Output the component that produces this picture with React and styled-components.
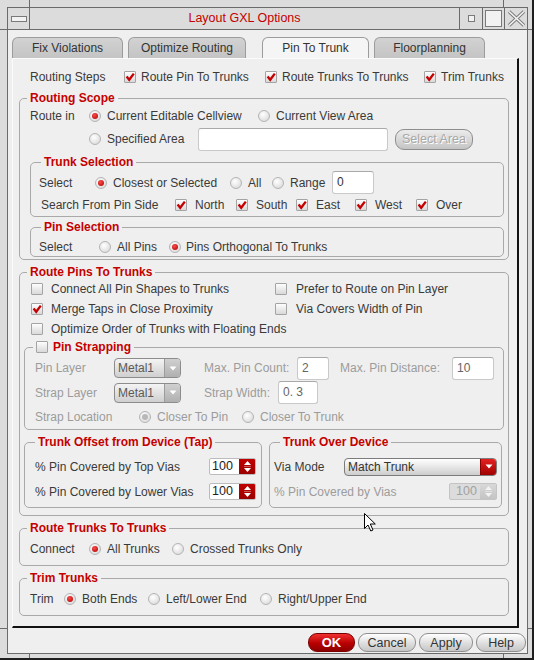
import React from 'react'
import styled, {createGlobalStyle} from 'styled-components'

const RED = '#c40000'
const LINE = '#6b6b6b'

const GlobalStyle = createGlobalStyle`
  html, body { margin: 0; padding: 0; background: #dcdcdc; }
  body {
    font-family: "Liberation Sans", Arial, sans-serif;
    font-size: 12px;
    color: #3a3a3a;
  }
  * { box-sizing: border-box; }
`

const Screen = styled.div`
  position: relative;
  width: 534px;
  height: 660px;
  padding: 7px 0 0 7px;
  background: #dcdcdc;
  border-right: 2px solid #1e1e1e;
  border-bottom: 2px solid #1e1e1e;
  overflow: hidden;
`

const Tick = styled.span`
  position: absolute;
  background: ${LINE};
  left: ${p => p.$x}px;
  top: ${p => p.$y}px;
  width: ${p => p.$w}px;
  height: ${p => p.$h}px;
`

const Frame = styled.div`
  width: 521px;
  height: 647px;
  border: 1px solid ${LINE};
  display: flex;
  flex-direction: column;
`

const TitleBar = styled.div`
  flex: none;
  height: 22px;
  display: flex;
  border-bottom: 1px solid ${LINE};
  background: #dcdcdc;
`

const MenuBtn = styled.div`
  width: 22px;
  border-right: 1px solid ${LINE};
  display: flex;
  align-items: center;
  justify-content: center;
  span {
    width: 16px;
    height: 6px;
    border: 1px solid #7a7a7a;
    background: #f2f2f2;
  }
`

const TitleText = styled.div`
  flex: 1;
  text-align: center;
  color: ${RED};
  font-size: 12.5px;
  line-height: 21px;
`

const WinBtn = styled.div`
  width: ${p => p.$w}px;
  border-left: 1px solid ${LINE};
  display: flex;
  align-items: center;
  justify-content: center;
`

const Square = styled.span`
  width: ${p => p.$s}px;
  height: ${p => p.$s}px;
  border: 1px solid #7a7a7a;
  background: #f2f2f2;
`

const Body = styled.div`
  flex: 1;
  background: #efefef;
  padding: 7px 0 0 4px;
  display: flex;
  flex-direction: column;
`

const TabStrip = styled.div`
  display: flex;
  height: 21px;
`

const Tab = styled.div`
  width: ${p => p.$w}px;
  margin-left: ${p => p.$ml || 0}px;
  height: 21px;
  border: 1px solid #9c9c9c;
  border-bottom: none;
  border-radius: 6px 6px 0 0;
  background: ${p => (p.$active ? '#f5f5f5' : 'linear-gradient(#d2d2d2, #c4c4c4)')};
  color: #333;
  text-align: center;
  line-height: 21px;
`

const Panel = styled.div`
  width: 507px;
  height: 570px;
  background: #efefef;
  border-top: 1px solid #fbfbfb;
  border-left: 1px solid #fbfbfb;
  border-right: 2px solid #111;
  border-bottom: 2px solid #111;
  padding: 4px 8px 0 6px;
`

const Row = styled.div`
  display: flex;
  align-items: center;
  height: ${p => p.$h}px;
  margin-top: ${p => p.$mt || 0}px;
  padding-left: ${p => p.$pl || 0}px;
`

const Label = styled.span`
  flex: ${p => (p.$w ? 'none' : '1')};
  width: ${p => (p.$w ? `${p.$w}px` : 'auto')};
  margin-left: ${p => p.$ml || 0}px;
  color: ${p => (p.$dim ? '#9c9c9c' : '#3a3a3a')};
  white-space: nowrap;
`

const Opt = styled.label`
  display: flex;
  align-items: center;
  gap: ${p => p.$gap || 6}px;
  width: ${p => (p.$w ? `${p.$w}px` : 'auto')};
  flex: none;
  color: ${p => (p.$dim ? '#9c9c9c' : '#3a3a3a')};
  white-space: nowrap;
`

const Box = styled.span`
  flex: none;
  width: 12px;
  height: 12px;
  border: 1px solid #a4a4a4;
  border-radius: 1px;
  background: linear-gradient(#fdfdfd, #d9d9d9);
  display: flex;
  align-items: center;
  justify-content: center;
`

const Round = styled.span`
  flex: none;
  width: 12px;
  height: 12px;
  border-radius: 50%;
  border: 1px solid #b4b4b4;
  background: radial-gradient(circle at 40% 35%, #ffffff, #d4d4d4);
  display: flex;
  align-items: center;
  justify-content: center;
  &::after {
    content: "";
    display: ${p => (p.$on ? 'block' : 'none')};
    width: 6px;
    height: 6px;
    border-radius: 50%;
    background: ${p => (p.$dim ? '#b8b8b8' : 'radial-gradient(circle at 40% 35%, #ff4a4a, #a80000)')};
  }
`

const Group = styled.fieldset`
  margin: ${p => p.$mt || 0}px 0 0 0;
  padding: 0;
  min-width: 0;
  width: ${p => (p.$w ? `${p.$w}px` : 'auto')};
  border: 1px solid #a9a9a9;
  border-radius: 5px;
`

const Legend = styled.legend`
  margin-left: ${p => p.$ml}px;
  padding: 0 3px;
  color: ${RED};
  font-weight: bold;
  line-height: 14px;
  display: flex;
  align-items: center;
  gap: 5px;
`

const GroupBody = styled.div`
  padding: ${p => p.$pt || 0}px ${p => p.$pr || 0}px ${p => p.$pb || 0}px ${p => p.$pl || 0}px;
`

const Field = styled.span`
  flex: none;
  width: ${p => p.$w}px;
  height: ${p => p.$h || 23}px;
  margin-left: ${p => p.$ml || 0}px;
  background: #fff;
  border: 1px solid #c9c9c9;
  border-top-color: #a9a9a9;
  border-radius: 3px;
  padding-left: 4px;
  line-height: ${p => (p.$h || 23) - 3}px;
  color: ${p => (p.$dim ? '#666' : '#333')};
`

const PillBtn = styled.span`
  flex: none;
  width: ${p => p.$w}px;
  height: ${p => p.$h || 19}px;
  margin-left: ${p => p.$ml || 0}px;
  border-radius: 9px;
  border: 1px solid ${p => (p.$red ? '#7a0000' : '#8e8e8e')};
  background: ${p =>
    p.$red
      ? 'linear-gradient(#f03030, #b80000 55%, #8c0000)'
      : p.$dim
        ? 'linear-gradient(#ececec, #c4c4c4)'
        : 'linear-gradient(#ffffff, #dedede 55%, #c6c6c6)'};
  color: ${p => (p.$red ? '#fff' : p.$dim ? '#a8a8a8' : '#333')};
  font-weight: ${p => (p.$red ? 'bold' : 'normal')};
  font-size: ${p => (p.$red ? 13 : 12.5)}px;
  text-shadow: ${p => (p.$dim ? '1px 1px 0 #fff' : 'none')};
  display: flex;
  align-items: center;
  justify-content: center;
`

const Combo = styled.span`
  flex: ${p => (p.$w ? 'none' : '1')};
  width: ${p => (p.$w ? `${p.$w}px` : 'auto')};
  height: ${p => p.$h}px;
  display: flex;
  border: 1px solid ${p => (p.$red ? '#7c7c7c' : '#8c8c8c')};
  border-radius: 4px;
  overflow: hidden;
  background: ${p => (p.$red ? 'linear-gradient(#ffffff, #e4e4e4 55%, #cdcdcd)' : 'linear-gradient(#f4f4f4, #cfcfcf)')};
  color: ${p => (p.$red ? '#333' : '#5a5a5a')};
  span:first-child {
    flex: 1;
    padding-left: 3px;
    line-height: ${p => p.$h - 2}px;
  }
`

const ComboArrow = styled.span`
  width: 16px;
  flex: none;
  display: flex;
  align-items: center;
  justify-content: center;
  border-left: 1px solid ${p => (p.$red ? '#8a0000' : '#9c9c9c')};
  background: ${p => (p.$red ? 'linear-gradient(#e42020, #a00000)' : 'linear-gradient(#d0d0d0, #b0b0b0)')};
`

const Spin = styled.span`
  flex: none;
  width: ${p => p.$w}px;
  height: 17px;
  display: flex;
  border: 1px solid ${p => (p.$dim ? '#c4c4c4' : '#bcbcbc')};
  border-radius: 2px;
  overflow: hidden;
  background: ${p => (p.$dim ? '#dcdcdc' : '#fff')};
  color: ${p => (p.$dim ? '#a2a2a2' : '#222')};
  span:first-child {
    flex: 1;
    padding-left: ${p => (p.$dim ? 6 : 2)}px;
    line-height: 15px;
    font-size: 12.5px;
  }
`

const SpinArrows = styled.span`
  width: 16px;
  flex: none;
  display: flex;
  align-items: center;
  justify-content: center;
  background: ${p => (p.$dim ? 'linear-gradient(#d8d8d8, #c4c4c4)' : 'linear-gradient(#c00000, #9c0000)')};
`

const Pair = styled.div`
  display: flex;
  gap: 7px;
  margin-top: 5px;
`

const ButtonBar = styled.div`
  display: flex;
  justify-content: flex-end;
  gap: 3px;
  margin-top: 5px;
  padding-right: 1px;
`

const Cursor = styled.svg`
  position: absolute;
  left: 364px;
  top: 513px;
`

const Check = ({on, label, w, gap = 5, dim}) => (
    <Opt $w={w} $gap={gap} $dim={dim}>
        <Box>
            {on && (
                <svg width="10" height="10" viewBox="0 0 10 10">
                    <path d="M1.6 4.6 L4.2 7.8 L8.8 1.6" stroke={RED} strokeWidth="2.3" fill="none"/>
                </svg>
            )}
        </Box>
        {label}
    </Opt>
)

const Radio = ({on, label, w, gap = 6, dim}) => (
    <Opt $w={w} $gap={gap} $dim={dim}>
        <Round $on={on} $dim={dim}/>
        {label}
    </Opt>
)

const Down = ({color = '#fff'}) => (
    <svg width="8" height="5" viewBox="0 0 8 5">
        <path d="M0.5 0.5 L7.5 0.5 L4 4.5 Z" fill={color}/>
    </svg>
)

const UpDown = ({color = '#fff'}) => (
    <svg width="9" height="13" viewBox="0 0 9 13">
        <path d="M1 5 L8 5 L4.5 1 Z" fill={color}/>
        <path d="M1 8 L8 8 L4.5 12 Z" fill={color}/>
        <line x1="1" y1="6.5" x2="8" y2="6.5" stroke="rgba(255,255,255,0.35)" strokeWidth="1"/>
    </svg>
)

const App = () => {
    return (
        <Screen>
            <GlobalStyle/>
            <Tick $x={29} $y={0} $w={1} $h={7}/>
            <Tick $x={503} $y={0} $w={1} $h={7}/>
            <Tick $x={0} $y={29} $w={7} $h={1}/>
            <Tick $x={527} $y={29} $w={7} $h={1}/>
            <Tick $x={0} $y={628} $w={7} $h={1}/>
            <Tick $x={527} $y={628} $w={7} $h={1}/>
            <Tick $x={29} $y={653} $w={1} $h={7}/>
            <Tick $x={503} $y={653} $w={1} $h={7}/>

            <Frame>
                <TitleBar>
                    <MenuBtn><span/></MenuBtn>
                    <TitleText>Layout GXL Options</TitleText>
                    <WinBtn $w={23}><Square $s={7}/></WinBtn>
                    <WinBtn $w={22}><Square $s={17}/></WinBtn>
                    <WinBtn $w={23}>
                        <svg width="19" height="17" viewBox="0 0 19 17">
                            <path d="M2 1.5 L17 15.5 M17 1.5 L2 15.5" stroke="#7a7a7a" strokeWidth="3.4"/>
                            <path d="M2 1.5 L17 15.5 M17 1.5 L2 15.5" stroke="#f4f4f4" strokeWidth="1.6"/>
                        </svg>
                    </WinBtn>
                </TitleBar>

                <Body>
                    <TabStrip>
                        <Tab $w={111}>Fix Violations</Tab>
                        <Tab $w={118} $ml={5}>Optimize Routing</Tab>
                        <Tab $w={107} $ml={16} $active>Pin To Trunk</Tab>
                        <Tab $w={111} $ml={5}>Floorplanning</Tab>
                    </TabStrip>

                    <Panel>
                        <Row $h={28} $pl={11}>
                            <Label $w={94}>Routing Steps</Label>
                            <Check on w={141} label="Route Pin To Trunks"/>
                            <Check on w={159} label="Route Trunks To Trunks"/>
                            <Check on label="Trim Trunks"/>
                        </Row>

                        <Group>
                            <Legend $ml={7}>Routing Scope</Legend>
                            <GroupBody $pl={10} $pr={4} $pb={2}>
                                <Row $h={22}>
                                    <Label $w={59}>Route in</Label>
                                    <Radio on w={169} label="Current Editable Cellview"/>
                                    <Radio label="Current View Area"/>
                                </Row>
                                <Row $h={24}>
                                    <Label $w={59}/>
                                    <Radio w={109} label="Specified Area"/>
                                    <Field $w={190}/>
                                    <PillBtn $w={78} $h={21} $ml={7} $dim>Select Area</PillBtn>
                                </Row>

                                <Group $mt={4}>
                                    <Legend $ml={10}>Trunk Selection</Legend>
                                    <GroupBody $pl={8} $pt={1} $pb={1}>
                                        <Row $h={25}>
                                            <Label $w={56}>Select</Label>
                                            <Radio on w={135} label="Closest or Selected"/>
                                            <Radio w={42} label="All"/>
                                            <Radio w={60} label="Range"/>
                                            <Field $w={42}>0</Field>
                                        </Row>
                                        <Row $h={20} $pl={2}>
                                            <Label $w={134}>Search From Pin Side</Label>
                                            <Check on w={61} gap={8} label="North"/>
                                            <Check on w={60} gap={8} label="South"/>
                                            <Check on w={59} gap={8} label="East"/>
                                            <Check on w={61} gap={8} label="West"/>
                                            <Check on gap={8} label="Over"/>
                                        </Row>
                                    </GroupBody>
                                </Group>

                                <Group $mt={3}>
                                    <Legend $ml={10}>Pin Selection</Legend>
                                    <GroupBody $pl={8} $pt={4}>
                                        <Row $h={18}>
                                            <Label $w={60}>Select</Label>
                                            <Radio w={70} gap={6} label="All Pins"/>
                                            <Radio on gap={5} label="Pins Orthogonal To Trunks"/>
                                        </Row>
                                    </GroupBody>
                                </Group>
                            </GroupBody>
                        </Group>

                        <Group $mt={5}>
                            <Legend $ml={7}>Route Pins To Trunks</Legend>
                            <GroupBody $pl={4} $pr={4} $pb={7}>
                                <Row $h={20} $pl={7}>
                                    <Check w={244} gap={8} label="Connect All Pin Shapes to Trunks"/>
                                    <Check gap={9} label="Prefer to Route on Pin Layer"/>
                                </Row>
                                <Row $h={20} $pl={7}>
                                    <Check on w={244} gap={8} label="Merge Taps in Close Proximity"/>
                                    <Check gap={9} label="Via Covers Width of Pin"/>
                                </Row>
                                <Row $h={20} $pl={7}>
                                    <Check gap={8} label="Optimize Order of Trunks with Floating Ends"/>
                                </Row>

                                <Group $mt={1}>
                                    <Legend $ml={8}>
                                        <Box/>
                                        Pin Strapping
                                    </Legend>
                                    <GroupBody $pl={10} $pt={2}>
                                        <Row $h={24}>
                                            <Label $w={79} $dim>Pin Layer</Label>
                                            <Combo $w={67} $h={20}>
                                                <span>Metal1</span>
                                                <ComboArrow><Down/></ComboArrow>
                                            </Combo>
                                            <Label $w={93} $ml={23} $dim>Max. Pin Count:</Label>
                                            <Field $w={32} $dim>2</Field>
                                            <Label $w={112} $ml={11} $dim>Max. Pin Distance:</Label>
                                            <Field $w={42} $dim>10</Field>
                                        </Row>
                                        <Row $h={25}>
                                            <Label $w={79} $dim>Strap Layer</Label>
                                            <Combo $w={67} $h={20}>
                                                <span>Metal1</span>
                                                <ComboArrow><Down/></ComboArrow>
                                            </Combo>
                                            <Label $w={74} $ml={23} $dim>Strap Width:</Label>
                                            <Field $w={40} $dim>0. 3</Field>
                                        </Row>
                                        <Row $h={24}>
                                            <Label $w={104} $dim>Strap Location</Label>
                                            <Radio on dim w={103} label="Closer To Pin"/>
                                            <Radio dim label="Closer To Trunk"/>
                                        </Row>
                                    </GroupBody>
                                </Group>

                                <Pair>
                                    <Group $w={238}>
                                        <Legend $ml={10}>Trunk Offset from Device (Tap)</Legend>
                                        <GroupBody $pl={10} $pr={5} $pt={8} $pb={6}>
                                            <Row $h={19}>
                                                <Label>% Pin Covered by Top Vias</Label>
                                                <Spin $w={47}>
                                                    <span>100</span>
                                                    <SpinArrows><UpDown/></SpinArrows>
                                                </Spin>
                                            </Row>
                                            <Row $h={19} $mt={6}>
                                                <Label>% Pin Covered by Lower Vias</Label>
                                                <Spin $w={47}>
                                                    <span>100</span>
                                                    <SpinArrows><UpDown/></SpinArrows>
                                                </Spin>
                                            </Row>
                                        </GroupBody>
                                    </Group>
                                    <Group $w={233}>
                                        <Legend $ml={10}>Trunk Over Device</Legend>
                                        <GroupBody $pl={4} $pr={4} $pt={8} $pb={6}>
                                            <Row $h={19}>
                                                <Label $w={70}>Via Mode</Label>
                                                <Combo $h={18} $red>
                                                    <span>Match Trunk</span>
                                                    <ComboArrow $red><Down/></ComboArrow>
                                                </Combo>
                                            </Row>
                                            <Row $h={19} $mt={6}>
                                                <Label $dim>% Pin Covered by Vias</Label>
                                                <Spin $w={48} $dim>
                                                    <span>100</span>
                                                    <SpinArrows $dim><UpDown color="#f2f2f2"/></SpinArrows>
                                                </Spin>
                                            </Row>
                                        </GroupBody>
                                    </Group>
                                </Pair>
                            </GroupBody>
                        </Group>

                        <Group $mt={5}>
                            <Legend $ml={7}>Route Trunks To Trunks</Legend>
                            <GroupBody $pl={10} $pt={2} $pb={4}>
                                <Row $h={24}>
                                    <Label $w={59}>Connect</Label>
                                    <Radio on w={83} label="All Trunks"/>
                                    <Radio label="Crossed Trunks Only"/>
                                </Row>
                            </GroupBody>
                        </Group>

                        <Group $mt={5}>
                            <Legend $ml={7}>Trim Trunks</Legend>
                            <GroupBody $pl={10} $pt={2} $pb={4}>
                                <Row $h={24}>
                                    <Label $w={34}>Trim</Label>
                                    <Radio on w={84} label="Both Ends"/>
                                    <Radio w={112} label="Left/Lower End"/>
                                    <Radio label="Right/Upper End"/>
                                </Row>
                            </GroupBody>
                        </Group>
                    </Panel>

                    <ButtonBar>
                        <PillBtn $w={47} $red>OK</PillBtn>
                        <PillBtn $w={58}>Cancel</PillBtn>
                        <PillBtn $w={54}>Apply</PillBtn>
                        <PillBtn $w={50}>Help</PillBtn>
                    </ButtonBar>
                </Body>
            </Frame>

            <Cursor width="13" height="19" viewBox="0 0 13 19">
                <path d="M0.5 0.5 L0.5 15.5 L4 12 L6.8 18 L9 17 L6.3 11 L11.3 11 Z" fill="#fff" stroke="#000" strokeWidth="1"/>
            </Cursor>
        </Screen>
    )
}

export default App
